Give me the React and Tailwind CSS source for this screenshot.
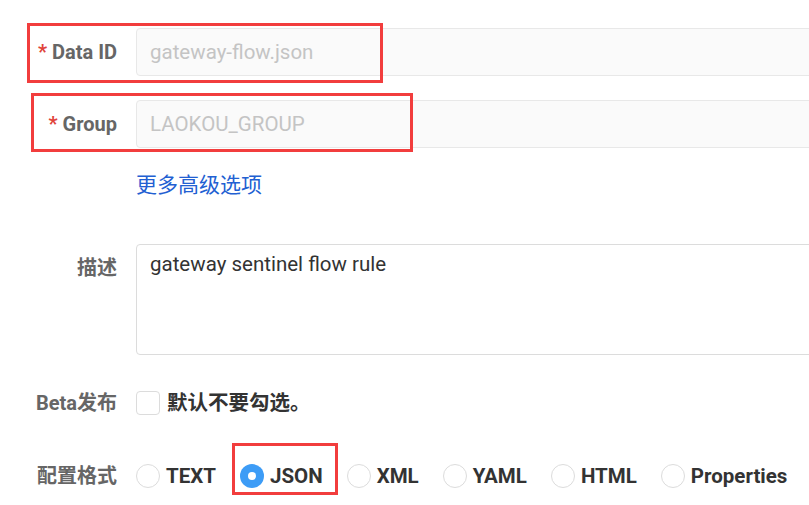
import React from 'react';

const font = { fontFamily: 'Roboto, "Noto Sans CJK SC", sans-serif' };

const Label = ({ required, children, className = '' }) => (
  <div className={`w-[117px] shrink-0 text-right text-[20px] leading-[28px] font-bold text-[#666] ${className}`}>
    {required && <span className="text-[#e0433a] mr-[5px]">*</span>}
    {children}
  </div>
);

const Radio = ({ label, checked }) => (
  <div className="flex items-center mr-[24px]">
    {checked ? (
      <span className="w-[24px] h-[24px] rounded-full bg-[#3d9cf6] flex items-center justify-center">
        <span className="w-[8px] h-[8px] rounded-full bg-white" />
      </span>
    ) : (
      <span className="w-[24px] h-[24px] rounded-full border border-[#dcdcdc] bg-white" />
    )}
    <span className="ml-[6px] text-[20.5px] leading-[28px] font-bold text-[#333]">{label}</span>
  </div>
);

export default function App() {
  const formats = ['TEXT', 'JSON', 'XML', 'YAML', 'HTML', 'Properties'];

  return (
    <div className="relative w-[809px] h-[505px] overflow-hidden bg-white" style={font}>
      <div className="pt-[28px]">
        {/* Data ID */}
        <div className="flex items-center">
          <Label required>Data ID</Label>
          <div className="ml-[19px] w-[720px] shrink-0 h-[48px] rounded-[4px] border border-[#e8e8e8] bg-[#fafafa] flex items-center px-[13px] text-[20.5px] text-[#c4c4c4]">
            gateway-flow.json
          </div>
        </div>

        {/* Group */}
        <div className="flex items-center mt-[24px]">
          <Label required>Group</Label>
          <div className="ml-[19px] w-[720px] shrink-0 h-[48px] rounded-[4px] border border-[#e8e8e8] bg-[#fafafa] flex items-center px-[13px] text-[20.5px] text-[#c4c4c4]">
            LAOKOU_GROUP
          </div>
        </div>

        {/* advanced */}
        <div className="mt-[23px] pl-[136px] text-[21px] leading-[28px] text-[#2260d2]">更多高级选项</div>

        {/* 描述 */}
        <div className="flex items-start mt-[45px]">
          <Label className="pt-[10px]">描述</Label>
          <div className="ml-[19px] w-[720px] shrink-0 h-[111px] rounded-[4px] border border-[#dcdcdc] bg-white px-[13px] pt-[5px] text-[20.5px] leading-[28px] text-[#333]">
            gateway sentinel flow rule
          </div>
        </div>

        {/* Beta */}
        <div className="flex items-center mt-[34px]">
          <Label>Beta发布</Label>
          <span className="ml-[19px] w-[24px] h-[24px] rounded-[4px] border border-[#dcdcdc] bg-white" />
          <span className="ml-[7px] text-[20.5px] leading-[28px] font-bold text-[#333]">默认不要勾选。</span>
        </div>

        {/* 配置格式 */}
        <div className="flex items-center mt-[45px]">
          <Label>配置格式</Label>
          <div className="ml-[19px] flex items-center">
            {formats.map((f) => (
              <Radio key={f} label={f} checked={f === 'JSON'} />
            ))}
          </div>
        </div>
      </div>

      {/* highlight boxes */}
      <div className="absolute left-[27px] top-[23px] w-[356px] h-[60px] border-[3px] border-[#f23d3d]" />
      <div className="absolute left-[31px] top-[93px] w-[382px] h-[59px] border-[3px] border-[#f23d3d]" />
      <div className="absolute left-[232px] top-[443px] w-[106px] h-[52px] border-[3px] border-[#f23d3d]" />
    </div>
  );
}
